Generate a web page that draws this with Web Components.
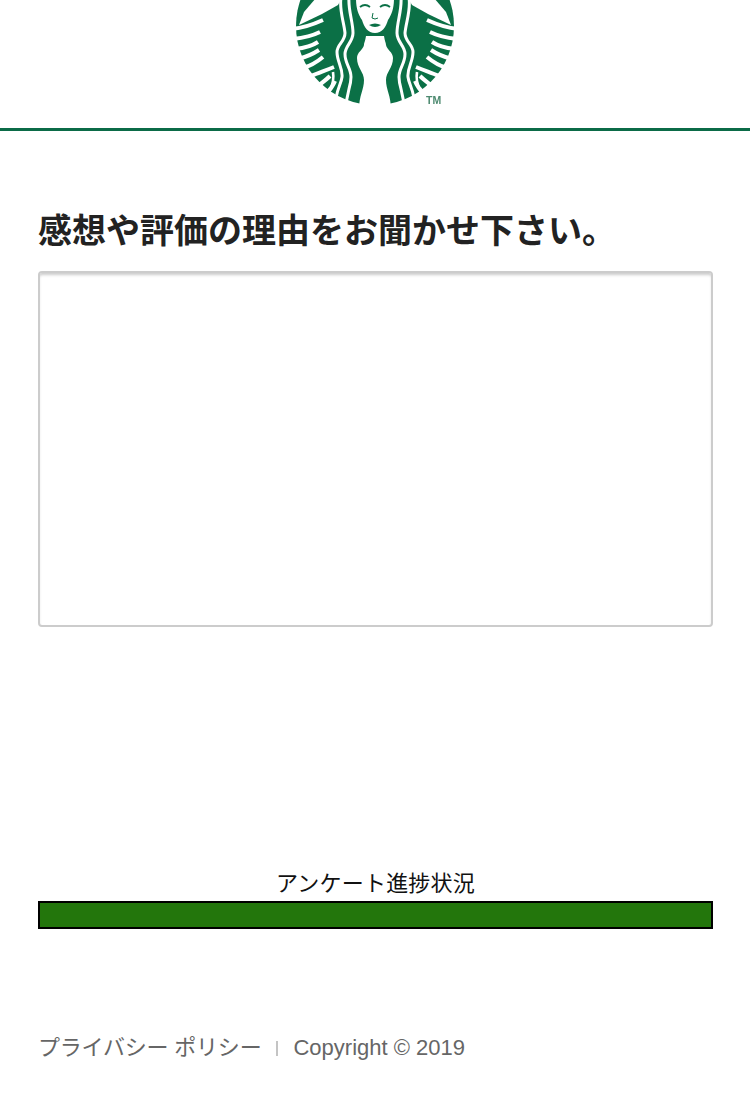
<!DOCTYPE html>
<html lang="ja">
<head>
<meta charset="utf-8">
<title>アンケート</title>
<style>
  html, body { margin: 0; padding: 0; background: #fff; }
</style>
</head>
<body>
<survey-page>
  <site-header></site-header>
  <survey-question label="感想や評価の理由をお聞かせ下さい。"></survey-question>
  <survey-progress label="アンケート進捗状況"></survey-progress>
  <site-footer></site-footer>
</survey-page>

<script>
class SurveyPage extends HTMLElement {
  constructor() {
    super();
    const shadow = this.attachShadow({ mode: 'open' });
    shadow.innerHTML = `
      <style>
        :host {
          display: flex;
          flex-direction: column;
          width: 750px;
          height: 1102px;
          overflow: hidden;
          font-family: "Liberation Sans", "Noto Sans CJK JP", sans-serif;
        }
      </style>
      <slot></slot>
    `;
  }
}

class SiteHeader extends HTMLElement {
  constructor() {
    super();
    const shadow = this.attachShadow({ mode: 'open' });
    shadow.innerHTML = `
      <style>
        :host {
          display: flex;
          justify-content: center;
          height: 128px;
          border-bottom: 3px solid #0b6b47;
        }
        svg { display: block; width: 190px; height: 110px; filter: blur(.6px); }
      </style>
      <svg viewBox="280 0 190 110" aria-label="logo">
        <defs>
          <g id="half" fill="none" stroke="#fff">
            <path d="M299 25 L322 14 L338 5 L342 -2 L316 -2 L304 12 Z" fill="#fff" stroke="none"/>
            <g stroke-width="4">
              <path d="M292 29 C302 28 312 25 323 20"/>
              <path d="M293 39 C302 38 312 36 320 32"/>
              <path d="M295 49 C304 48 312 46 318 42"/>
              <path d="M298 59 C306 57 313 54 319 50"/>
              <path d="M303 68 C310 66 317 62 323 57"/>
              <path d="M311 76 C318 73 324 71 334 67"/>
              <path d="M318 86 C323 82 327 79 330 76"/>
              <path d="M326 94 C330 90 333 86 335 81"/>
            </g>
            <g stroke-width="3">
              <path d="M341 -2 C339 10 344 22 345 33 C345 42 337 44 337 52 C337 62 343 68 342 77 C341 86 335 90 335 110"/>
              <path d="M349 -2 C348 10 353 22 353 33 C353 42 345 46 345 54 C345 64 351 68 351 77 C351 88 346 92 346 110"/>
              <path d="M333 72 C334 78 333 84 330 90 C328 94 326 98 326 104" stroke-width="2.6"/>
            </g>
          </g>
        </defs>
        <circle cx="375" cy="26" r="79" fill="#0b7046"/>
        <use href="#half"/>
        <use href="#half" transform="translate(750 0) scale(-1 1)"/>
        <path d="M366 36 C365 42 364 43 364 45 C363 50 357 52 357 58 C357 68 364 72 364 80 C364 90 359 95 359 110 H391 C391 95 386 90 386 80 C386 72 393 68 393 58 C393 52 387 50 386 45 C386 43 385 42 384 36 Z" fill="#fff"/>
        <path d="M356 -2 H394 C394 8 392 14 388 20 C386 27 382 33 375 33 C368 33 364 27 362 20 C358 14 356 8 356 -2 Z" fill="#fff"/>
        <path d="M360 7 Q365 3 370 7 M380 7 Q385 3 390 7" stroke="#0b7046" stroke-width="1.8" fill="none"/>
        <path d="M373 13 L372 18 Q375 20 378 18" stroke="#0b7046" stroke-width="1" fill="none"/>
        <path d="M369 25 Q375 22 381 25 Q375 29 369 25 Z" fill="#0b7046"/>
        <path d="M358 15 C360 24 363 30 367 35" stroke="#0b7046" stroke-width="1.6" fill="none"/>
        <path d="M392 15 C390 24 387 30 383 35" stroke="#0b7046" stroke-width="1.6" fill="none"/>
        <text x="426" y="104" font-family="Liberation Sans, sans-serif" font-size="10.5" font-weight="700" fill="#4d8a70">TM</text>
      </svg>
    `;
  }
}

class SurveyQuestion extends HTMLElement {
  constructor() {
    super();
    const shadow = this.attachShadow({ mode: 'open' });
    shadow.innerHTML = `
      <style>
        :host {
          display: block;
          padding: 78px 37px 0 38px;
        }
        h2 {
          margin: 0 0 18px;
          font-size: 34px;
          line-height: 44px;
          font-weight: 700;
          color: #222;
          white-space: nowrap;
        }
        textarea {
          display: block;
          box-sizing: border-box;
          width: 100%;
          height: 356px;
          padding: 8px;
          border: 2px solid #ccc;
          border-radius: 4px;
          box-shadow: inset 0 3px 3px -1px #ccc;
          background: #fff;
          resize: none;
          outline: none;
        }
      </style>
      <h2></h2>
      <textarea></textarea>
    `;
    shadow.querySelector('h2').textContent = this.getAttribute('label');
  }
}

class SurveyProgress extends HTMLElement {
  constructor() {
    super();
    const shadow = this.attachShadow({ mode: 'open' });
    shadow.innerHTML = `
      <style>
        :host {
          display: block;
          padding: 240px 37px 0 38px;
        }
        .label {
          text-align: center;
          font-size: 22px;
          letter-spacing: .2px;
          line-height: 34px;
          color: #111;
        }
        .track {
          box-sizing: border-box;
          height: 28px;
          border: 2px solid #000;
          background: #23760c;
        }
      </style>
      <div class="label"></div>
      <div class="track"></div>
    `;
    shadow.querySelector('.label').textContent = this.getAttribute('label');
  }
}

class SiteFooter extends HTMLElement {
  constructor() {
    super();
    const shadow = this.attachShadow({ mode: 'open' });
    shadow.innerHTML = `
      <style>
        :host {
          display: flex;
          align-items: center;
          gap: 15px;
          padding: 103px 38px 0;
          font-size: 22px;
          line-height: 32px;
          color: #666;
          white-space: nowrap;
        }
        .privacy { letter-spacing: -.2px; }
        .sep { width: 2px; height: 15px; background: #c4c4c4; }
      </style>
      <span class="privacy">プライバシー ポリシー</span>
      <span class="sep"></span>
      <span>Copyright © 2019</span>
    `;
  }
}

customElements.define('survey-page', SurveyPage);
customElements.define('site-header', SiteHeader);
customElements.define('survey-question', SurveyQuestion);
customElements.define('survey-progress', SurveyProgress);
customElements.define('site-footer', SiteFooter);
</script>
</body>
</html>
